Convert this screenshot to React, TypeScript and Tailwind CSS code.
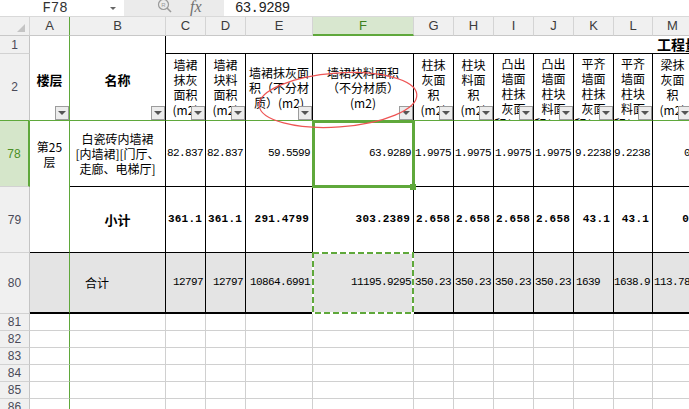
import React from "react";

const mono = "font-['Liberation_Mono',monospace]";
const cjk = "font-['Noto_Sans_CJK_SC',sans-serif]";
const sans = "font-['Liberation_Sans',sans-serif]";

// columns C..M (A and B are laid out by hand)
const cols = [
  { k: "C", w: "w-[40px]" },
  { k: "D", w: "w-[40px]" },
  { k: "E", w: "w-[67px]" },
  { k: "F", w: "w-[101px]" },
  { k: "G", w: "w-[40px]" },
  { k: "H", w: "w-[40px]" },
  { k: "I", w: "w-[40px]" },
  { k: "J", w: "w-[40px]" },
  { k: "K", w: "w-[40px]" },
  { k: "L", w: "w-[39px]" },
  { k: "M", w: "w-[40px]" },
];

const heads: string[][] = [
  ["墙裙", "抹灰", "面积", "(m2)"],
  ["墙裙", "块料", "面积", "(m2)"],
  ["墙裙抹灰面", "积（不分材", "质）(m2)"],
  ["墙裙块料面积", "（不分材质）", "(m2)"],
  ["柱抹", "灰面", "积", "(m2)"],
  ["柱块", "料面", "积", "(m2)"],
  ["凸出", "墙面", "柱抹", "灰面", "积(m2)"],
  ["凸出", "墙面", "柱块", "料面", "积(m2)"],
  ["平齐", "墙面", "柱抹", "灰面", "积(m2)"],
  ["平齐", "墙面", "柱块", "料面", "积(m2)"],
  ["梁抹", "灰面", "积", "(m2)"],
];

const r78 = ["82.837", "82.837", "59.5599", "63.9289", "1.9975", "1.9975", "1.9975", "1.9975", "9.2238", "9.2238", "0"];
const r79 = ["361.1", "361.1", "291.4799", "303.2389", "2.658", "2.658", "2.658", "2.658", "43.1", "43.1", "0"];
const r80 = ["12797", "12797", "10864.6991", "11195.9295", "350.23", "350.23", "350.23", "350.23", "1639", "1638.9", "113.78"];

function RowHead({ n, h, active, greenBottom }: { n: string; h: string; active?: boolean; greenBottom?: boolean }) {
  return (
    <div
      className={`${h} w-[30px] shrink-0 flex items-center justify-center text-[12px] ${sans} border-b ${
        active
          ? "bg-[#d5e6ca] text-[#4b8f25] border-r-2 border-r-[#5fa83b]"
          : "bg-[#f0f0f0] text-[#4a4a58] border-r border-r-[#c4c4c4]"
      } ${greenBottom ? "border-b-[#5fa83b]" : "border-b-[#d2d2d2]"}`}
    >
      {n}
    </div>
  );
}

function Drop() {
  return (
    <div className="absolute right-0 bottom-0 w-[14px] h-[14px] bg-[#ececec] border border-[#9c9c9c] flex items-center justify-center z-[5]">
      <div className="w-0 h-0 border-l-[4px] border-r-[4px] border-t-[4px] border-l-transparent border-r-transparent border-t-[#555]" />
    </div>
  );
}

function Selection() {
  return (
    <>
      <div className="absolute -left-[1px] -top-[1px] w-[103px] h-[68px] border-[3px] border-[#5fa83b] z-10 pointer-events-none" />
      <div className="absolute left-[97px] top-[63px] w-[6px] h-[6px] bg-[#5fa83b] z-20" />
    </>
  );
}

function Marquee() {
  return (
    <svg className="absolute -left-[1px] -top-[1px] z-10 pointer-events-none" width="102" height="62">
      <rect x="1" y="1" width="100" height="60" fill="none" stroke="#ffffff" strokeWidth="2" />
      <rect x="1" y="1" width="100" height="60" fill="none" stroke="#5fa83b" strokeWidth="2" strokeDasharray="6 3" />
    </svg>
  );
}

function TopBar() {
  return (
    <div className="flex h-[17px] bg-[#ebebeb] border-b border-[#d9d9d9]">
      <div className="w-[124px] shrink-0 bg-white flex items-center">
        <span className={`w-[110px] text-center text-[14px] text-[#333] ${mono}`}>F78</span>
        <div className="w-0 h-0 border-l-[3px] border-r-[3px] border-t-[3px] border-l-transparent border-r-transparent border-t-[#666]" />
      </div>
      <div className="w-[100px] shrink-0 flex items-center">
        <svg className="ml-[33px] -mt-[4px]" width="16" height="16" viewBox="0 0 16 16">
          <circle cx="6.5" cy="6.5" r="5" fill="none" stroke="#9a9a9a" strokeWidth="1.2" />
          <text x="6.5" y="9" fontSize="6" textAnchor="middle" fill="#9a9a9a" fontFamily="Liberation Sans">R</text>
          <line x1="10" y1="10" x2="14" y2="14" stroke="#9a9a9a" strokeWidth="1.6" />
        </svg>
        <span className="ml-[17px] -mt-[2px] text-[16px] italic text-[#707070] font-['Liberation_Serif',serif]">fx</span>
      </div>
      <div className="flex-1 bg-white flex items-center pl-[11px]">
        <span className={`text-[14px] tracking-[-0.6px] text-[#222] ${mono}`}>63.9289</span>
      </div>
    </div>
  );
}

function ColHeader() {
  return (
    <div className={`flex h-[19px] w-max bg-[#f0f0f0] ${sans} text-[13px] text-[#3c3c3c]`}>
      <div className="w-[30px] shrink-0 flex items-end justify-end pr-[4px] pb-[3px] border-r border-b border-r-[#d4d4d4] border-b-[#c8c8c8]">
        <svg width="8" height="8">
          <polygon points="8,0 8,8 0,8" fill="#c4c4c4" />
        </svg>
      </div>
      <div className="w-[40px] shrink-0 flex items-center justify-center border-r border-b border-r-[#5fa83b] border-b-[#c8c8c8]">A</div>
      <div className="w-[96px] shrink-0 flex items-center justify-center border-r border-b border-r-[#d4d4d4] border-b-[#c8c8c8]">B</div>
      {cols.map((c) =>
        c.k === "F" ? (
          <div key={c.k} className={`${c.w} shrink-0 flex items-center justify-center bg-[#d8e7cf] text-[#3d7f1f] border-r border-b-2 border-r-[#d4d4d4] border-b-[#5fa83b]`}>
            {c.k}
          </div>
        ) : (
          <div key={c.k} className={`${c.w} shrink-0 flex items-center justify-center border-r border-b border-r-[#d4d4d4] border-b-[#c8c8c8]`}>
            {c.k}
          </div>
        )
      )}
    </div>
  );
}

function HeaderRows() {
  return (
    <div className="flex h-[85px] w-max">
      <div className="w-[30px] shrink-0 flex flex-col">
        <RowHead n="1" h="h-[18px]" />
        <RowHead n="2" h="h-[67px]" greenBottom />
      </div>
      <div className={`w-[40px] shrink-0 relative flex items-center justify-center pt-[4px] border-r border-b border-[#5fa83b] ${cjk} font-bold text-[13px]`}>
        楼层
        <Drop />
      </div>
      <div className={`w-[96px] shrink-0 relative flex items-center justify-center pt-[4px] border-r border-b border-r-black border-b-[#5fa83b] ${cjk} font-bold text-[13px]`}>
        名称
        <Drop />
      </div>
      <div className="flex flex-col">
        <div className={`h-[18px] w-[527px] border-b border-black flex items-center pl-[491px] whitespace-nowrap overflow-hidden ${cjk} font-bold text-[14px]`}>
          <span className="underline underline-offset-[3px]">工程量</span>
        </div>
        <div className="flex h-[67px]">
          {cols.map((c, i) => (
            <div
              key={c.k}
              className={`${c.w} shrink-0 relative overflow-hidden flex flex-col items-center border-r border-b border-r-black border-b-[#5fa83b] ${cjk} text-[12px] leading-[15px] whitespace-nowrap ${
                heads[i].length > 4 ? "justify-start pt-[2px]" : "justify-center"
              }`}
            >
              {heads[i].map((t, j) => (
                <div key={j}>{t}</div>
              ))}
              <Drop />
            </div>
          ))}
        </div>
      </div>
    </div>
  );
}

function Row78() {
  return (
    <div className="flex h-[66px] w-max">
      <RowHead n="78" h="h-[66px]" active />
      <div className={`w-[40px] shrink-0 flex flex-col items-center justify-center border-r border-[#5fa83b] ${cjk} text-[12px] leading-[15px]`}>
        <div>第25</div>
        <div>层</div>
      </div>
      <div className={`w-[96px] shrink-0 flex flex-col items-center justify-center border-r border-b border-black ${cjk} text-[12px] leading-[15px] whitespace-nowrap`}>
        <div>白瓷砖内墙裙</div>
        <div>[内墙裙][门厅、</div>
        <div>走廊、电梯厅]</div>
      </div>
      {cols.map((c, i) => (
        <div
          key={c.k}
          className={`${c.w} shrink-0 relative flex items-center justify-end pr-[2px] border-r border-b border-black whitespace-nowrap ${mono} text-[11px] tracking-[-0.6px]`}
        >
          {r78[i]}
          {c.k === "F" && <Selection />}
        </div>
      ))}
    </div>
  );
}

function Row79() {
  return (
    <div className="flex h-[66px] w-max">
      <RowHead n="79" h="h-[66px]" />
      <div className="w-[40px] shrink-0 border-r border-b border-r-[#5fa83b] border-b-black" />
      <div className={`w-[96px] shrink-0 flex items-center justify-center border-r border-b border-black ${cjk} font-bold text-[13px]`}>小计</div>
      {cols.map((c, i) => (
        <div
          key={c.k}
          className={`${c.w} shrink-0 flex items-center justify-end pr-[3px] border-r border-b border-black whitespace-nowrap ${mono} font-bold text-[11px] tracking-[0.2px]`}
        >
          {r79[i]}
        </div>
      ))}
    </div>
  );
}

function Row80() {
  return (
    <div className="flex h-[61px] w-max">
      <RowHead n="80" h="h-[61px]" />
      <div className="w-[40px] shrink-0 bg-[#e4e4e4] border-r border-b-2 border-r-[#5fa83b] border-b-black" />
      <div className={`w-[96px] shrink-0 bg-[#e4e4e4] flex items-center pl-[15px] border-r border-b-2 border-black ${cjk} text-[12px]`}>合计</div>
      {cols.map((c, i) => (
        <div
          key={c.k}
          className={`${c.w} shrink-0 relative bg-[#e4e4e4] flex items-center justify-end border-r border-b-2 border-black whitespace-nowrap ${mono} text-[11px] tracking-[-0.6px] ${
            c.k === "K" ? "pr-[13px]" : "pr-[2px]"
          }`}
        >
          {r80[i]}
          {c.k === "F" && <Marquee />}
        </div>
      ))}
    </div>
  );
}

function EmptyRow({ n }: { n: string }) {
  return (
    <div className="flex h-[17px] w-max">
      <RowHead n={n} h="h-[17px]" />
      <div className="w-[40px] shrink-0 border-r border-b border-r-[#5fa83b] border-b-[#d0d0d0]" />
      <div className="w-[96px] shrink-0 border-r border-b border-[#d0d0d0]" />
      {cols.map((c) => (
        <div key={c.k} className={`${c.w} shrink-0 border-r border-b border-[#d0d0d0]`} />
      ))}
    </div>
  );
}

export default function App() {
  return (
    <div className="w-[689px] h-[409px] overflow-hidden bg-white relative select-none text-black">
      <TopBar />
      <ColHeader />
      <HeaderRows />
      <Row78 />
      <Row79 />
      <Row80 />
      {["81", "82", "83", "84", "85", "86"].map((n) => (
        <EmptyRow key={n} n={n} />
      ))}

      {/* red hand-drawn circle over E2:F2 */}
      <svg className="absolute left-0 top-0 z-30 pointer-events-none" width="689" height="409">
        <ellipse cx="338" cy="100" rx="79" ry="27" transform="rotate(-4 338 100)" fill="none" stroke="#ee5555" strokeWidth="1.2" />
      </svg>
    </div>
  );
}
